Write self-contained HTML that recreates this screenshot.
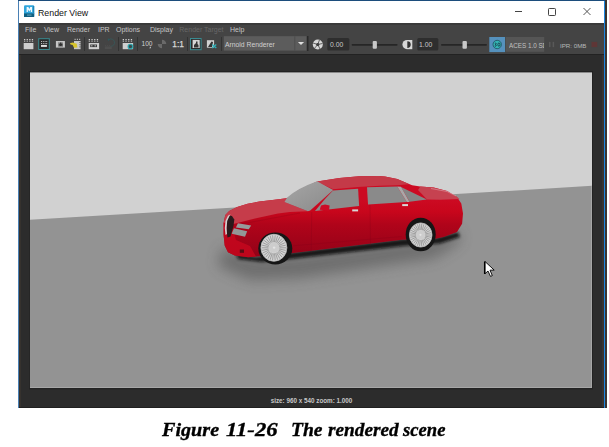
<!DOCTYPE html>
<html><head><meta charset="utf-8">
<style>
*{margin:0;padding:0;box-sizing:border-box}
html,body{width:609px;height:447px;background:#fff;overflow:hidden;position:relative;font-family:"Liberation Sans",sans-serif}
.a{position:absolute}
svg{position:absolute;left:0;top:0}
.t{position:absolute;white-space:nowrap;font-family:"Liberation Sans",sans-serif}
.mi{top:26px;font-size:7px;line-height:8px;color:#c4c4c4}
.mi.dim{color:#686868}
.cw{position:absolute;top:419px;-webkit-text-stroke:0.35px #000;font-family:"Liberation Serif",serif;font-style:italic;font-weight:bold;font-size:19px;line-height:22px;color:#000;white-space:nowrap;transform-origin:0 0}
</style></head><body>
<svg width="609" height="447" viewBox="0 0 609 447">
<defs>
<linearGradient id="side" x1="0" y1="0" x2="0" y2="1">
<stop offset="0.3" stop-color="#cc0a22"/><stop offset="0.44" stop-color="#c8061c"/><stop offset="0.6" stop-color="#b0041a"/><stop offset="0.95" stop-color="#960218"/>
</linearGradient>
<linearGradient id="glass" x1="0" y1="0" x2="1" y2="1">
<stop offset="0" stop-color="#a6a6a6"/><stop offset="1" stop-color="#8a8a8a"/>
</linearGradient>
<filter id="blur3" x="-20%" y="-50%" width="140%" height="200%"><feGaussianBlur stdDeviation="3"/></filter>
<filter id="blur2" x="-20%" y="-50%" width="140%" height="200%"><feGaussianBlur stdDeviation="1.8"/></filter><filter id="blur6" x="-30%" y="-100%" width="160%" height="300%"><feGaussianBlur stdDeviation="7"/></filter>
</defs>
<!-- window frame -->
<rect x="18" y="0" width="589" height="408" fill="#2c2c2c"/>
<rect x="19" y="1" width="585" height="22" fill="#fff"/>
<rect x="18" y="0" width="588" height="1" fill="#1c4d7c"/>
<rect x="18" y="1" width="1" height="407" fill="#4a80b4"/>
<rect x="604" y="1" width="1" height="407" fill="#1e86e0"/>
<rect x="605" y="0" width="2" height="408" fill="#3a3430"/>
<rect x="19" y="55" width="2" height="352" fill="#36322e"/>
<rect x="602" y="55" width="2" height="352" fill="#38332f"/>
<rect x="29" y="72" width="1" height="316" fill="#262626"/>
<rect x="592" y="72" width="1" height="316" fill="#222"/>
<rect x="19" y="407" width="585" height="1" fill="#202020"/>
<rect x="19" y="23" width="585" height="2" fill="#3a3a3a"/>
<rect x="19" y="25" width="585" height="29" fill="#444"/>
<rect x="19" y="54" width="585" height="1" fill="#222"/>
<!-- maya icon -->
<rect x="24" y="5.3" width="10.2" height="11.7" rx="1.2" fill="#30a6dc"/>
<rect x="24" y="13.4" width="10.2" height="3.6" fill="#0f5f80"/>
<rect x="33" y="6" width="1.2" height="8" fill="#2186b8"/>
<path d="M26.6,12 V7 H28.4 L29.35,8.9 L30.3,7 H32.1 V12 H30.8 V9.6 L29.35,11.4 L27.9,9.6 V12 Z" fill="#eef8fc"/>
<rect x="27" y="14.6" width="4.5" height="1" fill="#6aa8c0"/>
<!-- window buttons -->
<rect x="515" y="11" width="7" height="1" fill="#444"/>
<rect x="548.5" y="8.5" width="7" height="7" rx="0.8" fill="none" stroke="#444" stroke-width="1"/>
<path d="M583.5,8 L590.5,15 M590.5,8 L583.5,15" stroke="#444" stroke-width="0.9"/>
<!-- toolbar separators -->
<g fill="#333">
<rect x="84" y="37" width="1" height="14"/><rect x="118" y="37" width="1" height="14"/><rect x="137" y="37" width="1" height="14"/>
<rect x="187" y="37" width="1" height="14"/><rect x="221" y="37" width="1" height="14"/>
</g>
<rect x="307" y="36" width="1.5" height="15" fill="#2a2a2a"/>
<!-- icon1 -->
<g fill="#cfcfcf">
<rect x="24" y="39" width="1.3" height="1"/><rect x="26.6" y="39" width="1.3" height="1"/><rect x="29.2" y="39" width="1.3" height="1"/><rect x="31.8" y="39" width="1.3" height="1"/>
<rect x="24" y="40.6" width="1.3" height="1"/><rect x="26.6" y="40.6" width="1.3" height="1"/><rect x="29.2" y="40.6" width="1.3" height="1"/><rect x="31.8" y="40.6" width="1.3" height="1"/>
<rect x="23.7" y="43" width="9.7" height="6.2"/>
</g>
<!-- icon2 -->
<rect x="38.7" y="38.7" width="10.6" height="10.8" fill="#2a2a2a" stroke="#3a8a90" stroke-width="1"/>
<g fill="#c8c8c8">
<rect x="41" y="41" width="1" height="0.9"/><rect x="42.8" y="41" width="1" height="0.9"/><rect x="44.6" y="41" width="1" height="0.9"/><rect x="46.2" y="41" width="1" height="0.9"/>
<rect x="41" y="43" width="1" height="0.9"/><rect x="42.8" y="43" width="1" height="0.9"/><rect x="44.6" y="43" width="1" height="0.9"/><rect x="46.2" y="43" width="1" height="0.9"/>
</g>
<rect x="41" y="44.9" width="5.9" height="2" fill="#e0e0e0"/>
<!-- icon3 -->
<rect x="55.9" y="41" width="9" height="6.6" fill="#c6c6c6"/>
<rect x="58.2" y="42" width="4.8" height="4.6" fill="#6a6a6a"/>
<circle cx="60.6" cy="44.4" r="1.5" fill="#2e2e2e"/>
<rect x="58.6" y="42.3" width="1" height="1" fill="#ddd"/><rect x="61.6" y="42.3" width="1" height="1" fill="#ddd"/>
<!-- icon4 -->
<g fill="#c8c8c8">
<rect x="74.5" y="38.8" width="1.2" height="1"/><rect x="76.8" y="38.8" width="1.2" height="1"/><rect x="79" y="38.8" width="1.2" height="1"/>
<rect x="74" y="41" width="6.6" height="8.2"/>
</g>
<g fill="#555"><rect x="79.4" y="42" width="1.2" height="1"/><rect x="79.4" y="44.2" width="1.2" height="1"/><rect x="79.4" y="46.4" width="1.2" height="1"/></g>
<path d="M69.9,43.2 L72.8,42.6 L76.8,43.8 L77.4,47.6 L74,47.8 L72.6,45 L70.6,44.4 Z" fill="#d6c42c"/>
<!-- icon5 -->
<g fill="#cfcfcf">
<rect x="88.7" y="39" width="1.3" height="1"/><rect x="91.4" y="39" width="1.3" height="1"/><rect x="94.1" y="39" width="1.3" height="1"/><rect x="96.8" y="39" width="1.3" height="1"/>
<rect x="88.7" y="40.6" width="1.3" height="1"/><rect x="91.4" y="40.6" width="1.3" height="1"/><rect x="94.1" y="40.6" width="1.3" height="1"/><rect x="96.8" y="40.6" width="1.3" height="1"/>
<rect x="88.7" y="43" width="10.4" height="6.2"/>
</g>
<rect x="90.2" y="44.5" width="6.8" height="2.6" fill="#3c3c3c"/>
<rect x="91" y="45.2" width="1.5" height="1.2" fill="#aaa"/><rect x="94.5" y="45.2" width="1.5" height="1.2" fill="#aaa"/>
<!-- icon6 faded -->
<path d="M109,39.4 A3.7,3.7 0 1 1 110.5,46.3" fill="none" stroke="#355a5c" stroke-width="1" opacity="0.8"/>
<path d="M107.8,38.2 L110,39.5 L108,41 Z" fill="#2c5a5e"/>
<g fill="#4e4e4e"><rect x="105" y="45" width="1" height="0.8"/><rect x="107" y="45" width="1" height="0.8"/><rect x="109" y="45" width="1" height="0.8"/><rect x="104.8" y="46.5" width="7" height="2.5"/></g>
<!-- icon7 -->
<g fill="#cfcfcf">
<rect x="122.7" y="39" width="1.3" height="1"/><rect x="125.4" y="39" width="1.3" height="1"/><rect x="128.1" y="39" width="1.3" height="1"/><rect x="130.8" y="39" width="1.3" height="1"/>
<rect x="122.7" y="40.6" width="1.3" height="1"/><rect x="125.4" y="40.6" width="1.3" height="1"/><rect x="128.1" y="40.6" width="1.3" height="1"/><rect x="130.8" y="40.6" width="1.3" height="1"/>
<rect x="122.7" y="43" width="10.4" height="6.2"/>
</g>
<circle cx="130.4" cy="46.5" r="2.3" fill="#3a4a4c" stroke="#2aa8b0" stroke-width="1.1"/>
<!-- icon9 checker -->
<path d="M162,39.7 A4.3,4.3 0 0 1 166.3,44 L162,44 Z M162,48.3 A4.3,4.3 0 0 1 157.7,44 L162,44 Z" fill="#6a6a6a"/>
<!-- icon10 -->
<rect x="190.5" y="38.5" width="10.6" height="11.2" fill="#2b2b2b" stroke="#3a8a90" stroke-width="1"/>
<rect x="192.6" y="39.9" width="7.1" height="8.1" fill="#d4d4d4"/>
<path d="M194,47.5 L194,45 L196,43 L196,41.5 L197.5,41.5 L197.5,44 L198.5,45 L198.5,47.5 Z" fill="#333"/>
<!-- icon11 -->
<rect x="206.9" y="40.2" width="7.2" height="7.5" fill="#d0d0d0"/>
<path d="M208,47 L210.5,43 L211.5,41.5 L213,42 L212,47 Z" fill="#333"/>
<path d="M212.2,44.6 L216.3,48 M216.3,44.6 L212.2,48" stroke="#30b0b8" stroke-width="1.3"/>
<!-- dropdown -->
<rect x="223.8" y="36.2" width="82.6" height="14.4" fill="#5c5c5c"/>
<rect x="294.3" y="36.2" width="1" height="14.4" fill="#4e4e4e"/>
<path d="M297.9,41.9 L304.1,41.9 L301,45 Z" fill="#e0e0e0"/>
<!-- aperture -->
<circle cx="317.8" cy="44.5" r="5" fill="#d8d8d8"/>
<circle cx="317.8" cy="44.5" r="1.6" fill="#333"/>
<path d="M317.8,44.5 L319.5,39.8 M317.8,44.5 L322.4,43.5 M317.8,44.5 L320,49 M317.8,44.5 L314.5,48.3 M317.8,44.5 L313,43" stroke="#444" stroke-width="0.8"/>
<!-- inputs & sliders -->
<rect x="327.3" y="37.9" width="22" height="12.5" rx="1.5" fill="#2e2e2e"/>
<rect x="351.6" y="43.9" width="46" height="1.8" rx="0.9" fill="#262626"/>
<rect x="372.7" y="40.9" width="4.2" height="7.8" rx="1" fill="#c8c8c8"/>
<rect x="407" y="40" width="5.3" height="9.2" fill="#d8d8d8"/>
<path d="M407,40 A4.6,4.6 0 0 0 407,49.2 Z" fill="#d8d8d8"/>
<path d="M407.3,41.2 A3.4,3.4 0 0 1 407.3,48 Z" fill="#333"/>
<rect x="417.3" y="37.9" width="21" height="12.5" rx="1.5" fill="#2e2e2e"/>
<rect x="441" y="43.9" width="46" height="1.8" rx="0.9" fill="#262626"/>
<rect x="462.5" y="40.9" width="4.4" height="7.8" rx="1" fill="#c8c8c8"/>
<rect x="489.3" y="37" width="15.8" height="15.1" fill="#5591bd"/>
<circle cx="497.2" cy="44.5" r="4.2" fill="#33b3b3" stroke="#1d4d5a" stroke-width="0.8"/><path d="M494.8,43.2 Q496,42.6 496.3,43.8 Q496.2,44.5 495.4,44.6 Q496.4,44.8 496.2,45.8 Q495.8,46.6 494.7,46" fill="none" stroke="#123" stroke-width="0.7"/><ellipse cx="498.9" cy="44.6" rx="1.1" ry="1.6" fill="none" stroke="#123" stroke-width="0.7"/>
<rect x="506" y="37" width="38.2" height="14.8" fill="#555"/>
<rect x="549" y="41.9" width="1.5" height="5.2" fill="#595959"/><rect x="552.6" y="41.9" width="1.5" height="5.2" fill="#595959"/>
<rect x="591.5" y="41.9" width="5.7" height="5.2" fill="#5e3636"/>
<!-- render image -->
<rect x="30" y="72" width="562" height="316" fill="#d1d1d1"/>
<polygon points="30,219.8 592,185.8 592,388 30,388" fill="#939393"/>
<rect x="29" y="71" width="564" height="1" fill="#222"/><rect x="30" y="72" width="562" height="1" fill="#8a8a8a"/><rect x="30" y="387" width="562" height="1" fill="#a6a6a6"/><rect x="591" y="186" width="1" height="202" fill="#a6a6a6"/><rect x="29" y="388" width="564" height="1.5" fill="#222"/>
<!-- car shadow -->
<path d="M222,248 L258,258 L295,256 L404,242 L440,238 L458,230 L460,242 L435,258 L300,278 L250,280 L218,266 Z" fill="#404040" opacity="0.45" filter="url(#blur6)"/>
<path d="M236,254 L256,257 L291,252.5 L402,239 L436,238 L458,232 L460,237 L440,243.5 L404,246 L295,258.5 L262,262 L238,259 Z" fill="#0c0c0c" opacity="0.9" filter="url(#blur2)"/>
<clipPath id="bodyclip"><path d="M223.6,223 L225.3,215 L229.2,211 L237.1,207.1 L247.6,203.8 L259.4,201.6 L272.5,199.9 L284.4,198.5 L287.7,197.9 L284.4,202 L307.9,211.2 L296,210.8 L281,209.6 L251.5,210.5 L235,213 L228,215.5 Z" fill="#c63c4a"/></clipPath>
<!-- car body -->
<path d="M223.6,223 L225.3,215 L229.2,211 L237.1,207.1 L247.6,203.8 L259.4,201.6 L272.5,199.9 L284.4,198.5 L287.7,197.9 L298.7,189.9 L317.1,181.6 L339.4,177.9 L359.1,176.3 L378.8,175.9 L385,176.6 L397.3,179.1 L405.5,182.4 L412.1,185.3 L420.3,186.5 L433.6,187.6 L447,191 L457,196.9 L461.3,203.6 L463,213.6 L462.1,223.7 L457,232.1 L443.6,237.1 L435.3,238.8 L402,239.8 L291.2,253.2 L256.5,256.5 L248.2,257.2 L234.8,255.6 L228,252.2 L224.7,245.5 L223.6,235 Z" fill="url(#side)"/>
<path d="M223.6,223 L225.3,215 L229.2,211 L237.1,207.1 L247.6,203.8 L259.4,201.6 L272.5,199.9 L284.4,198.5 L287.7,197.9 L284.4,202 L307.9,211.2 L290,212 L278,213.5 L255,218.5 L231.4,224.4 L228,223 Z" fill="#c63c4a"/>
<path d="M317.1,181.6 L339.4,177.9 L359.1,176.3 L378.8,175.9 L385,176.6 L397.3,179.1 L405.5,182.4 L409,184.2 L397,185.2 L380,185.8 L358,187 L333.2,189.3 Z" fill="#c43a48"/>
<path d="M420.3,186.5 L433.6,187.6 L447,191 L457,196.9 L459.5,199 L440,199.8 L427,199.6 L418,190 Z" fill="#c64250"/>
<path d="M431,188.5 L447,191.5 L456,196" fill="none" stroke="#e0a0a8" stroke-width="0.8" opacity="0.7"/>
<!-- front face brighter -->
<path d="M223.6,223 L228,222 L231.4,224.4 L236,240 L250,246 L256,256.6 L248.2,257.2 L234.8,255.6 L228,252.2 L224.7,245.5 L223.6,235 Z" fill="#c8081e" opacity="0.8"/>
<!-- seams -->
<path d="M311.7,212 L311.2,253 M370,205 L370.5,245.5 M293,245.8 L402,236.5 M236,225 L300,213" fill="none" stroke="#7a0216" stroke-width="0.6" opacity="0.35"/>
<!-- windows -->
<path d="M284.4,202 L287.2,197.4 Q297.5,188.2 317.1,181.2 L333.2,190 L310.2,210.6 L307.9,211.2 Z" fill="url(#glass)"/>
<path d="M315,211 L325,199 L333,190.6 L358.1,188.7 L359.1,206 Z" fill="#8c8c8c"/>
<path d="M367,187.3 L397.3,186.5 L406.8,202.1 L368,204.5 Z" fill="#8a8a8a"/>
<path d="M401,186.9 L426.9,199.6 L409.6,201.7 Z" fill="#858585"/>
<path d="M397.3,186.5 L401,186.7 L409.6,202 L406.8,202.1 Z" fill="#a8a8a8"/>
<!-- mirror, handles -->
<path d="M319.7,209.8 L321,205.5 L325,204.5 L329.6,205.5 L329,210.4 Z" fill="#cc0c26"/>
<rect x="352.2" y="209.4" width="5.9" height="2" fill="#d8d8d8"/>
<rect x="402.2" y="204.1" width="5.8" height="2" fill="#d8d8d8"/>
<!-- headlights, grille -->
<path d="M237.9,223.2 L251.2,225.4 L248.7,229.3 L235.9,227.4 Z" fill="#979b9b"/>
<path d="M233.9,228.3 L247.2,231.3 L245,236.7 L231.7,233.8 Z" fill="#939797"/>
<path d="M229.5,215.5 L232,216 L234.3,219.5 L233.5,226 L230.5,236.5 L227.5,237.5 L226.5,230 L227,220 Z" fill="#2a1a1c"/>
<path d="M230.5,214.3 L228,215.8 L225.5,221 L224.8,228 L225.5,235 L227,234 L226.6,228 L227.2,221 L229,217 Z" fill="#d0d0d0"/>
<rect x="239.8" y="249.5" width="4.2" height="3.3" fill="#5a0c14"/>
<!-- wheels -->
<g clip-path="url(#bodyclip)">
<ellipse cx="275.5" cy="248" rx="19" ry="18.5" fill="#141414"/>
<ellipse cx="420.7" cy="234.5" rx="16.5" ry="18" fill="#141414"/>
</g>
<ellipse cx="275.3" cy="248.4" rx="17" ry="16" fill="#161616"/>
<ellipse cx="273.9" cy="247.8" rx="13" ry="13.5" fill="#d4d4d4"/>
<path d="M279.4,247.8L286.0,247.8M279.2,249.0L285.7,250.4M278.9,250.1L284.9,252.9M278.3,251.1L283.7,255.2M277.6,252.0L282.0,257.1M276.6,252.7L279.9,258.7M275.6,253.2L277.6,259.7M274.5,253.4L275.2,260.3M273.3,253.4L272.6,260.3M272.2,253.2L270.2,259.7M271.2,252.7L267.9,258.7M270.2,252.0L265.8,257.1M269.5,251.1L264.1,255.2M268.9,250.1L262.9,252.9M268.6,249.0L262.1,250.4M268.4,247.8L261.8,247.8M268.6,246.6L262.1,245.2M268.9,245.5L262.9,242.7M269.5,244.5L264.1,240.4M270.2,243.6L265.8,238.5M271.2,242.9L267.9,236.9M272.2,242.4L270.2,235.9M273.3,242.2L272.6,235.3M274.5,242.2L275.2,235.3M275.6,242.4L277.6,235.9M276.6,242.9L279.9,236.9M277.6,243.6L282.0,238.5M278.3,244.5L283.7,240.4M278.9,245.5L284.9,242.7M279.2,246.6L285.7,245.2" stroke="#8c8c8c" stroke-width="0.75"/>
<ellipse cx="273.9" cy="247.8" rx="13" ry="13.5" fill="none" stroke="#bdbdbd" stroke-width="0.8"/>
<circle cx="274.1" cy="247.6" r="5" fill="#cdcdcd"/>
<circle cx="274.1" cy="247.6" r="1.2" fill="#e4e4e4"/>
<ellipse cx="420.7" cy="234.5" rx="15" ry="16.8" fill="#161616"/>
<ellipse cx="420.7" cy="235" rx="11.3" ry="12.1" fill="#d4d4d4"/>
<path d="M425.4,235.0L431.2,235.0M425.3,236.1L431.0,237.3M425.0,237.1L430.3,239.6M424.5,238.0L429.2,241.6M423.9,238.8L427.7,243.4M423.1,239.4L426.0,244.7M422.2,239.8L423.9,245.7M421.2,240.1L421.8,246.2M420.2,240.1L419.6,246.2M419.2,239.8L417.5,245.7M418.3,239.4L415.4,244.7M417.5,238.8L413.7,243.4M416.9,238.0L412.2,241.6M416.4,237.1L411.1,239.6M416.1,236.1L410.4,237.3M416.0,235.0L410.2,235.0M416.1,233.9L410.4,232.7M416.4,232.9L411.1,230.4M416.9,232.0L412.2,228.4M417.5,231.2L413.7,226.6M418.3,230.6L415.4,225.3M419.2,230.2L417.5,224.3M420.2,229.9L419.6,223.8M421.2,229.9L421.8,223.8M422.2,230.2L423.9,224.3M423.1,230.6L426.0,225.3M423.9,231.2L427.7,226.6M424.5,232.0L429.2,228.4M425.0,232.9L430.3,230.4M425.3,233.9L431.0,232.7" stroke="#8c8c8c" stroke-width="0.75"/>
<ellipse cx="420.7" cy="235" rx="11.3" ry="12.1" fill="none" stroke="#bdbdbd" stroke-width="0.8"/>
<circle cx="420.5" cy="234.8" r="4.4" fill="#cdcdcd"/>
<circle cx="420.5" cy="234.8" r="1.1" fill="#e4e4e4"/>
<!-- cursor -->
<path d="M485,261.5 L485,273.7 L488,271 L490.5,276.4 L492.3,275.6 L490,270.2 L494.2,270.1 Z" fill="#fff" stroke="#000" stroke-width="0.9"/><path d="M484.6,261.5 L484.6,274" stroke="#000" stroke-width="1.3"/>
</svg>
<div class="t" style="left:38px;top:7.5px;font-size:8.8px;line-height:10px;color:#111">Render View</div>
<div class="t mi" style="left:25px">File</div>
<div class="t mi" style="left:44px">View</div>
<div class="t mi" style="left:67px">Render</div>
<div class="t mi" style="left:98px">IPR</div>
<div class="t mi" style="left:116px">Options</div>
<div class="t mi" style="left:150px">Display</div>
<div class="t mi dim" style="left:179.3px">Render Target</div>
<div class="t mi" style="left:230px">Help</div>
<div class="t" style="left:141.5px;top:40.3px;font-size:6.6px;line-height:7px;color:#d0d0d0">100</div><svg width="609" height="447" style="pointer-events:none"><path d="M149,48.3 L151,46.3 L151,48.3 Z" fill="#bbb"/></svg>
<div class="t" style="left:172.3px;top:39.6px;font-size:8.4px;line-height:9px;color:#d8d8d8;-webkit-text-stroke:0.25px #d8d8d8">1:1</div>
<div class="t" style="left:225px;top:41px;font-size:6.8px;line-height:8px;color:#d0d0d0">Arnold Renderer</div>
<div class="t" style="left:330px;top:41px;font-size:6.8px;line-height:8px;color:#c8c8c8">0.00</div>
<div class="t" style="left:419px;top:41px;font-size:6.8px;line-height:8px;color:#c8c8c8">1.00</div>
<div class="t" style="left:509px;top:41.5px;font-size:6.3px;line-height:8px;color:#c0c0c0;width:35px;overflow:hidden">ACES 1.0 SDR</div>
<div class="t" style="left:560px;top:41.5px;font-size:6.2px;line-height:8px;color:#b4b8b8">IPR: 0MB</div>
<div class="t" style="left:19px;top:397px;width:585px;text-align:center;font-size:6.3px;line-height:8px;font-weight:bold;color:#c8c8c8">size: 960 x 540 zoom: 1.000</div>
<div class="cw" style="left:162px;transform:scaleX(1.06)">Figure</div>
<div class="cw" style="left:226px;transform:scaleX(1.19)">11-26</div>
<div class="cw" style="left:291px;transform:scaleX(1.03)">The</div>
<div class="cw" style="left:328px;transform:scaleX(1.015)">rendered</div>
<div class="cw" style="left:403px;transform:scaleX(0.98)">scene</div>
</body></html>
